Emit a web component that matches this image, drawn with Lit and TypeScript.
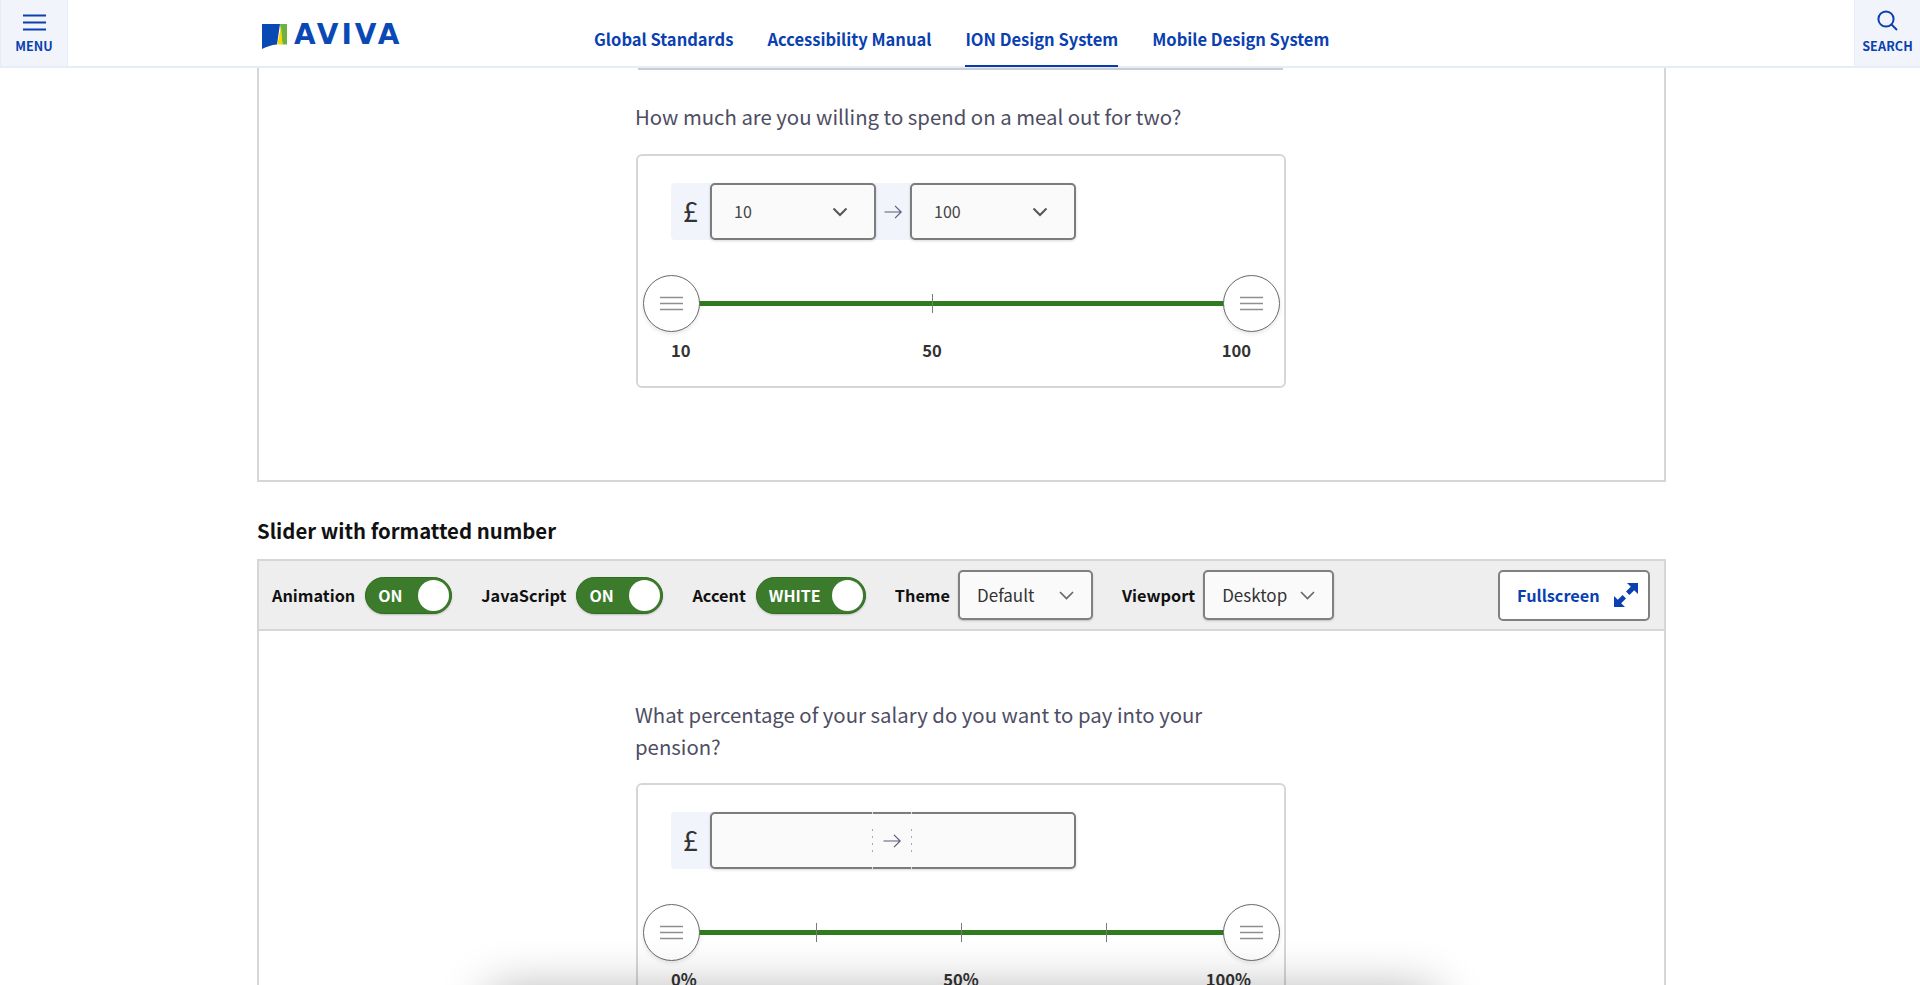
import { LitElement, html, css, svg } from "lit";
import { customElement } from "lit/decorators.js";

const chevron = svg`<svg class="chev" width="16" height="10" viewBox="0 0 16 10" fill="none" stroke="currentColor" stroke-width="2"><path d="M1.5 1.5 8 8l6.5-6.5"/></svg>`;
const chevronThin = svg`<svg class="chev" width="15" height="9" viewBox="0 0 15 9" fill="none" stroke="currentColor" stroke-width="1.6"><path d="M1 1 7.5 7.5 14 1"/></svg>`;
const arrow = svg`<svg width="18" height="14" viewBox="0 0 18 14" fill="none" stroke="#5b5b74" stroke-width="1.2"><path d="M0.5 7H17M11 0.8 17.2 7 11 13.2"/></svg>`;

@customElement("app-root")
export class AppRoot extends LitElement {
  static styles = css`
    :host {
      display: block;
      position: relative;
      height: 100vh;
      overflow: hidden;
      background: #fff;
      font-family: "Noto Sans CJK SC", "Noto Sans", sans-serif;
      color: #333;
    }
    .header {
      display: flex;
      height: 68px;
      box-sizing: border-box;
      border-bottom: 2px solid #e6edf7;
      background: #fff;
      position: relative;
      z-index: 2;
    }
    .hbtn {
      width: 68px;
      box-sizing: border-box;
      background: #f1f5fb;
      border-left: 1px solid #e6edf7;
      border-right: 1px solid #e6edf7;
      color: #0a40b0;
      display: flex;
      flex-direction: column;
      align-items: center;
      font-size: 12.6px;
      font-weight: 700;
      line-height: 16px;
      letter-spacing: 0.1px;
      padding-top: 14px;
      gap: 7px;
    }
    .hbtn svg { display: block; height: 17px; }
    .hbtn.search { margin-left: auto; width: 66px; border-right: 0; padding-top: 10px; gap: 7px; }
    .hbtn.search svg { height: 21px; }
    .logo {
      display: flex;
      margin-left: 194px;
      padding-top: 24px;
      gap: 7px;
      width: 332px;
      box-sizing: border-box;
      flex: none;
    }
    .logo svg { flex: none; }
    .wordmark {
      font-family: "DejaVu Sans", sans-serif;
      font-weight: 700;
      font-size: 28px;
      line-height: 21px;
      letter-spacing: 3px;
      color: #0a49b4;
    }
    .nav { display: flex; gap: 34px; }
    .nav a {
      display: block;
      box-sizing: border-box;
      height: 66px;
      padding-top: 27px;
      font-size: 16.52px;
      line-height: 24px;
      font-weight: 700;
      color: #0a40b0;
    }
    .nav a.active { border-bottom: 2px solid #0a3aaf; height: 67px; }
    .main { width: 1409px; margin-left: 257px; }
    .panel {
      box-sizing: border-box;
      border-left: 2px solid #d6d6d6;
      border-right: 2px solid #d6d6d6;
    }
    .panel.first { border-bottom: 2px solid #d6d6d6; padding-bottom: 92px; }
    .stub { height: 2px; width: 645px; margin: 0 0 30px 379px; background: #c9ced6; }
    .col { width: 652px; margin-left: 376px; }
    .q {
      margin: 0 0 22px;
      font-size: 20.35px;
      line-height: 32px;
      font-weight: 400;
      color: #4d4d63;
    }
    .q.two { margin-bottom: 21px; max-width: 620px; }
    .card {
      box-sizing: border-box;
      border: 2px solid #d6d6d6;
      border-radius: 6px;
      padding: 27px 33px 0;
      height: 234px;
      margin-left: 1px;
      width: 650px;
    }
    .card.open { height: 300px; }
    .row {
      display: flex;
      height: 57px;
      width: 405px;
      background: #f1f5fb;
      border-radius: 4px;
    }
    .pre {
      width: 39px;
      flex: none;
      display: flex;
      align-items: center;
      justify-content: center;
      padding-bottom: 3px;
      box-sizing: border-box;
      font-size: 28px;
      font-weight: 400;
      color: #333;
    }
    .sel {
      box-sizing: border-box;
      width: 166px;
      height: 57px;
      flex: none;
      display: flex;
      align-items: center;
      justify-content: space-between;
      padding: 0 26px 2px 22px;
      border: 2px solid #7c7c7c;
      border-radius: 5px;
      background: #fafafa;
      box-shadow: 0 1px 3px rgba(0, 0, 0, 0.15);
      font-size: 16px;
      color: #444;
    }
    .sel .chev { color: #555; margin-top: 2px; }
    .between { width: 34px; flex: none; display: flex; align-items: center; justify-content: center; }
    .range {
      box-sizing: border-box;
      width: 366px;
      height: 57px;
      flex: none;
      display: flex;
      align-items: stretch;
      justify-content: flex-end;
      padding-right: 162px;
      border: 2px solid #7c7c7c;
      border-radius: 5px;
      background: #fafafa;
      box-shadow: 0 1px 3px rgba(0, 0, 0, 0.15);
    }
    .mark {
      width: 1px;
      margin: -2px 0;
      display: flex;
      align-items: center;
      background: linear-gradient(#ddd 2px, transparent 2px, transparent calc(100% - 2px), #ddd calc(100% - 2px));
    }
    .mark i {
      display: block;
      width: 1px;
      height: 23px;
      background: repeating-linear-gradient(#a8a8a8 0 2px, transparent 2px 7px);
    }
    .mid { width: 38px; display: flex; align-items: center; justify-content: center; }
    .slider { position: relative; width: 580px; height: 57px; margin-top: 35px; display: flex; align-items: center; }
    .track { position: relative; width: 100%; height: 5px; background: #317b1f; }
    .tick {
      position: absolute;
      top: -7px;
      width: 1px;
      height: 19px;
      background: #7a7a7a;
    }
    .thumb {
      position: absolute;
      top: 0;
      box-sizing: border-box;
      width: 57px;
      height: 57px;
      margin-left: -28.5px;
      border: 1px solid #6a6a6a;
      border-radius: 50%;
      background: #fff;
      box-shadow: 0 2px 4px rgba(0, 0, 0, 0.1);
      display: flex;
      align-items: center;
      justify-content: center;
    }
    .labels {
      position: relative;
      width: 580px;
      display: flex;
      justify-content: space-between;
      margin-top: 6px;
      font-size: 16.6px;
      line-height: 24px;
      font-weight: 700;
      color: #333;
    }
    .labels .mid-l { position: absolute; transform: translateX(-50%); }
    h2 {
      margin: 32px 0 13px;
      font-size: 20.35px;
      line-height: 32px;
      font-weight: 700;
      color: #111;
    }
    .toolbar {
      box-sizing: border-box;
      height: 72px;
      border: 2px solid #d6d6d6;
      background: #eee;
      display: flex;
      align-items: center;
      padding: 0 14px 0 13px;
      font-size: 16.3px;
    }
    .grp { display: flex; align-items: center; gap: 10px; margin-right: 29px; font-weight: 700; color: #111; }
    .grp.tight { gap: 8px; margin-right: 29px; }
    .toggle {
      box-sizing: border-box;
      width: 87px;
      height: 37px;
      border-radius: 19px;
      background: #3c7b2c;
      border: 1px solid #2f6c20;
      display: flex;
      align-items: center;
      padding: 0 2px 0 12px;
      color: #fff;
      font-size: 16px;
      font-weight: 700;
      box-shadow: 0 1px 2px rgba(0, 0, 0, 0.2);
    }
    .toggle.wide { width: 110px; }
    .knob { margin-left: auto; width: 31px; height: 31px; border-radius: 50%; background: #fff; }
    .tsel {
      box-sizing: border-box;
      height: 50px;
      display: flex;
      align-items: center;
      justify-content: space-between;
      padding: 0 17px 2px 17px;
      border: 2px solid #808080;
      border-radius: 5px;
      background: #fafafa;
      box-shadow: 0 1px 2px rgba(0, 0, 0, 0.2);
      font-size: 17px;
      font-weight: 400;
      color: #333;
      width: 135px;
    }
    .tsel.vp { width: 131px; }
    .tsel .chev { color: #666; margin-top: 2px; }
    .fs {
      margin-left: auto;
      box-sizing: border-box;
      width: 152px;
      height: 51px;
      display: flex;
      align-items: center;
      gap: 14px;
      padding-left: 17px;
      border: 2px solid #808080;
      border-radius: 5px;
      background: #fff;
      color: #0a40b0;
      font-weight: 700;
    }
    .body { padding-top: 67px; }
    .dock {
      position: absolute;
      left: 490px;
      width: 945px;
      top: calc(100% + 6px);
      height: 60px;
      background: #fff;
      box-shadow: 0 0 50px rgba(0, 0, 0, 0.32);
    }
  `;

  private thumb(pos: number) {
    return html`<span class="thumb" style="left:${pos}%">
      <svg width="23" height="15" viewBox="0 0 23 15" stroke="#8f8f8f" stroke-width="1.5"><path d="M0 1.5H23M0 7.5H23M0 13.5H23"/></svg>
    </span>`;
  }

  private slider(ticks: number[]) {
    return html`<div class="slider">
      <div class="track">
        ${ticks.map((t) => html`<span class="tick" style="left:${t}%"></span>`)}
      </div>
      ${this.thumb(0)}${this.thumb(100)}
    </div>`;
  }

  private toggle(label: string, value: string, wide = false) {
    return html`<div class="grp">
      <span>${label}</span>
      <div class="toggle ${wide ? "wide" : ""}"><span>${value}</span><span class="knob"></span></div>
    </div>`;
  }

  render() {
    return html`
      <header class="header">
        <div class="hbtn">
          <svg width="23" height="17" viewBox="0 0 23 17" stroke="#0a40b0" stroke-width="2"><path d="M0 1.5H23M0 8.5H23M0 15.5H23"/></svg>
          <span>MENU</span>
        </div>
        <div class="logo">
          <svg width="25" height="25" viewBox="0 0 25 25">
            <path fill="#0a49b4" d="M0 0H18L15 20.4C9 20.8 4 23 0 25Z"/>
            <path fill="#6fb043" d="M18 0H25V20.4H20.5Z"/>
            <path fill="#f5d800" d="M19 2 20.5 20.4H15.4Z"/>
          </svg>
          <span class="wordmark">AVIVA</span>
        </div>
        <nav class="nav">
          <a>Global Standards</a>
          <a>Accessibility Manual</a>
          <a class="active">ION Design System</a>
          <a>Mobile Design System</a>
        </nav>
        <div class="hbtn search">
          <svg width="21" height="21" viewBox="0 0 21 21" fill="none" stroke="#0a40b0" stroke-width="2"><circle cx="9" cy="9" r="7.6"/><path d="M14.5 14.5 20 20"/></svg>
          <span>SEARCH</span>
        </div>
      </header>
      <main class="main">
        <section class="panel first">
          <div class="stub"></div>
          <div class="col">
            <p class="q">How much are you willing to spend on a meal out for two?</p>
            <div class="card">
              <div class="row">
                <span class="pre">£</span>
                <div class="sel"><span>10</span>${chevron}</div>
                <span class="between">${arrow}</span>
                <div class="sel"><span>100</span>${chevron}</div>
              </div>
              ${this.slider([45])}
              <div class="labels"><span>10</span><span class="mid-l" style="left:45%">50</span><span>100</span></div>
            </div>
          </div>
        </section>
        <h2>Slider with formatted number</h2>
        <div class="toolbar">
          ${this.toggle("Animation", "ON")}
          ${this.toggle("JavaScript", "ON")}
          ${this.toggle("Accent", "WHITE", true)}
          <div class="grp tight"><span>Theme</span><div class="tsel"><span>Default</span>${chevronThin}</div></div>
          <div class="grp tight"><span>Viewport</span><div class="tsel vp"><span>Desktop</span>${chevronThin}</div></div>
          <div class="fs">
            <span>Fullscreen</span>
            <svg width="24" height="24" viewBox="0 0 24 24" fill="#0a40b0"><path d="M13 0H24V11L20.2 7.2 15.4 12 12 8.6 16.8 3.8Z"/><path d="M0 24V13L3.8 16.8 8.6 12 12 15.4 7.2 20.2 11 24Z"/></svg>
          </div>
        </div>
        <section class="panel body">
          <div class="col">
            <p class="q two">What percentage of your salary do you want to pay into your pension?</p>
            <div class="card open">
              <div class="row">
                <span class="pre">£</span>
                <div class="range">
                  <span class="mark"><i></i></span>
                  <span class="mid">${arrow}</span>
                  <span class="mark"><i></i></span>
                </div>
              </div>
              ${this.slider([25, 50, 75])}
              <div class="labels"><span>0%</span><span class="mid-l" style="left:50%">50%</span><span>100%</span></div>
            </div>
          </div>
        </section>
      </main>
      <div class="dock"></div>
    `;
  }
}
